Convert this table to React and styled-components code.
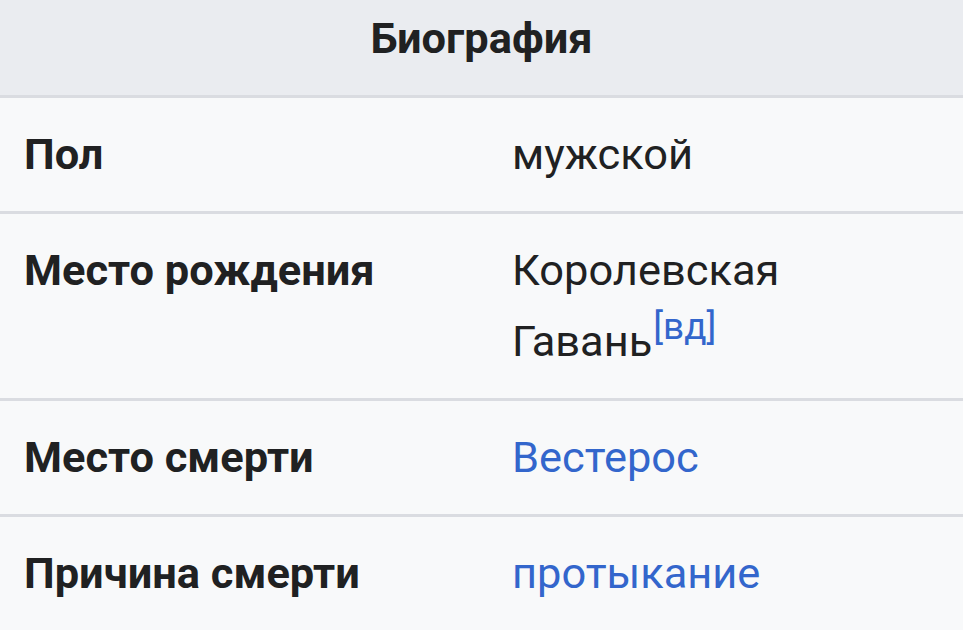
import React from "react";
import styled, { createGlobalStyle } from "styled-components";

const Global = createGlobalStyle`
  html, body { margin: 0; padding: 0; background: #f8f9fa; }
  body { font-family: Roboto, "Noto Sans", "Liberation Sans", sans-serif; color: #202122; }
`;

const Table = styled.table`
  width: 963px;
  table-layout: fixed;
  border-collapse: collapse;
  background: #f8f9fa;
  font-size: 43.4px;
  line-height: 71px;
`;

const HeaderCell = styled.th`
  background: #eaecf0;
  text-align: center;
  font-weight: 700;
  padding: 3px 24px 21px;
  border-bottom: 3px solid #dadce1;
`;

const Row = styled.tr`
  & + & > * { border-top: 3px solid #dadce1; }
`;

const Label = styled.th`
  text-align: left;
  font-weight: 700;
  vertical-align: top;
  padding: 21px 24px 21px 24px;
`;

const Value = styled.td`
  vertical-align: top;
  padding: 21px 24px 21px 23px;
`;

const Link = styled.a`
  color: #3366cc;
  text-decoration: none;
`;

const Sup = styled.sup`
  font-size: 37px;
  line-height: 1;
  vertical-align: 17px;
  margin-left: 1px;
`;

const rows = [
  { label: "Пол", value: <>мужской</> },
  {
    label: "Место рождения",
    value: (
      <>
        Королевская Гавань
        <Sup>
          <Link href="#">[вд]</Link>
        </Sup>
      </>
    ),
  },
  { label: "Место смерти", value: <Link href="#">Вестерос</Link> },
  { label: "Причина смерти", value: <Link href="#">протыкание</Link> },
];

export default function App() {
  return (
    <>
      <Global />
      <Table>
        <colgroup>
          <col style={{ width: 489 }} />
          <col />
        </colgroup>
        <thead>
          <tr>
            <HeaderCell colSpan={2}>Биография</HeaderCell>
          </tr>
        </thead>
        <tbody>
          {rows.map((r) => (
            <Row key={r.label}>
              <Label>{r.label}</Label>
              <Value>{r.value}</Value>
            </Row>
          ))}
        </tbody>
      </Table>
    </>
  );
}
